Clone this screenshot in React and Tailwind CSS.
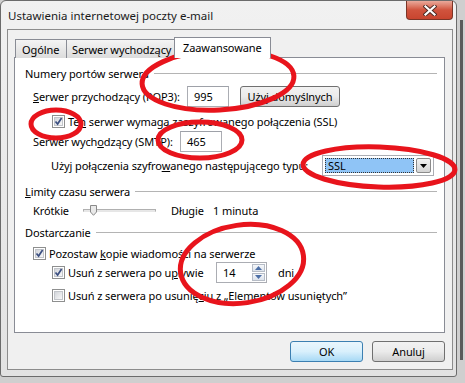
import React from 'react';

const Check = ({ checked }) => (
  <span className="w-[13px] h-[13px] shrink-0 border border-[#8e8f8f] bg-white p-[1px] flex">
    <span className="relative flex-1 border border-[#c2c5ca] bg-linear-to-br from-[#d2d5da] to-[#f8f8f9]">
      {checked && (
        <svg className="absolute -left-[1px] -top-[1px]" width="9" height="9" viewBox="0 0 9 9">
          <path d="M1.5 4.5 L3.6 7 L7.6 1" fill="none" stroke="#3b4f81" strokeWidth="1.7" />
        </svg>
      )}
    </span>
  </span>
);

const Button = ({ children, primary, className = '' }) => (
  <div
    className={`h-[21px] flex items-center justify-center rounded-[3px] border ${
      primary
        ? 'border-[#3c7fb1] bg-linear-to-b from-[#eaf6fd] via-[#d9f0fc] to-[#a7d9f5]'
        : 'border-[#707070] bg-linear-to-b from-[#f2f2f2] via-[#ebebeb] to-[#cfcfcf]'
    } ${className}`}
  >
    {children}
  </div>
);

const Group = ({ children, top }) => (
  <div className={`flex items-center h-[16px] pl-[10px] pr-[7px] ${top}`}>
    <span>{children}</span>
    <span className="flex-1 ml-[5px] h-px bg-[#b4b4b4]" />
  </div>
);

const Input = ({ value, className = '' }) => (
  <div className={`h-[21px] border border-[#abadb3] border-t-[#9ea1a8] bg-white flex items-center pl-[6px] ${className}`}>
    {value}
  </div>
);

export default function App() {
  return (
    <div className="relative w-[465px] h-[383px] overflow-hidden whitespace-nowrap bg-[#cfcfcf] font-['Noto_Sans',sans-serif] text-[11px] tracking-[-0.1px] leading-none text-black">
      <div className="absolute right-[2px] top-[20px] w-[3px] h-[340px] bg-[#5a5a5a]" />
      {/* window */}
      <div className="relative w-[457px] h-[377px] rounded-t-[6px] rounded-b-[3px] border border-[#6b6b6b] bg-linear-to-b from-[#f1f1f1] to-[#e2e2e2] flex flex-col pl-[6px] pr-[3px] pb-[6px]">
        <div className="h-[28px] flex items-start justify-between">
          <span className="mt-[9px] ml-[1px] text-[11.5px] tracking-normal text-[#1a1a1a]">Ustawienia internetowej poczty e-mail</span>
          <div className="w-[47px] h-[19px] rounded-b-[4px] border border-t-0 border-[#7a3527] bg-linear-to-b from-[#e9a99b] via-[#d0533d] to-[#c8452f] flex items-center justify-center">
            <svg width="14" height="11" viewBox="0 0 14 11">
              <path d="M2.5 1.5 L11.5 9.5 M11.5 1.5 L2.5 9.5" stroke="#4a2a24" strokeWidth="4" strokeLinecap="square" />
              <path d="M2.5 1.5 L11.5 9.5 M11.5 1.5 L2.5 9.5" stroke="#ffffff" strokeWidth="2.2" strokeLinecap="square" />
            </svg>
          </div>
        </div>
        {/* client */}
        <div className="flex-1 border border-[#8c8c8c] bg-[#f0f0f0] flex flex-col pl-[6px] pr-[7px]">
          {/* tabs */}
          <div className="flex items-end h-[27px] pl-[1px]">
            <div className="relative top-px h-[19px] w-[52px] border border-b-0 border-[#898c95] bg-linear-to-b from-[#f4f4f4] to-[#dcdcdc] pl-[6px] flex items-center">Ogólne</div>
            <div className="relative top-px h-[19px] w-[110px] -ml-px border border-b-0 border-[#898c95] bg-linear-to-b from-[#f4f4f4] to-[#dcdcdc] pl-[5px] flex items-center">Serwer wychodzący</div>
            <div className="relative z-10 top-px h-[21px] w-[97px] -ml-[2px] border border-b-0 border-[#898c95] bg-white pl-[8px] pb-[2px] flex items-center">Zaawansowane</div>
          </div>
          {/* panel */}
          <div className="h-[276px] border border-[#898c95] bg-white flex flex-col">
            <Group top="mt-[7px]">Numery portów serwera</Group>
            <div className="flex items-center mt-[5px] pl-[18px] h-[21px]">
              <span className="w-[154px]"><u>S</u>erwer przychodzący (POP3):</span>
              <Input value="995" className="w-[42px]" />
              <Button className="ml-[11px] w-[100px]">Użyj domyślnych</Button>
            </div>
            <div className="flex items-center mt-[6px] pl-[37px] h-[16px] gap-[3px]">
              <Check checked />
              <span>Te<u>n</u> serwer wymaga zaszyfrowanego połączenia (SSL)</span>
            </div>
            <div className="flex items-center mt-[2px] pl-[18px] h-[21px]">
              <span className="w-[147px]">Serwer wych<u>o</u>dzący (SMTP):</span>
              <Input value="465" className="w-[42px]" />
            </div>
            <div className="flex items-center mt-[3px] pl-[36px] h-[21px]">
              <span className="w-[271px]">Użyj połączenia szyfro<u>w</u>anego następującego typu:</span>
              <div className="w-[112px] h-[21px] border border-[#abadb3] bg-white flex items-stretch p-[2px]">
                <div className="flex-1 bg-[#8fc4f6] border border-dotted border-[#333] flex items-center pl-[2px]">SSL</div>
                <div className="w-[15px] ml-[2px] border border-[#8b8b8b] rounded-[2px] bg-linear-to-b from-[#f2f2f2] to-[#d4d4d4] flex items-center justify-center">
                  <svg width="7" height="4" viewBox="0 0 7 4"><path d="M0 0 H7 L3.5 4 Z" fill="#000" /></svg>
                </div>
              </div>
            </div>
            <Group top="mt-[7px]"><u>L</u>imity czasu serwera</Group>
            <div className="flex items-center mt-[3px] pl-[18px] h-[16px]">
              <span className="w-[50px]">Krótkie</span>
              <div className="relative w-[73px] h-[16px] flex items-center">
                <div className="w-full h-[3px] border border-[#b0b0b0] border-b-[#e6e6e6] bg-[#e7e7e7]" />
                <svg className="absolute left-[7px] top-[3px]" width="7" height="11" viewBox="0 0 7 11">
                  <path d="M0.5 0.5 H6.5 V7 L3.5 10.3 L0.5 7 Z" fill="#e9e9e9" stroke="#8a8a8a" />
                </svg>
              </div>
              <span className="ml-[15px] w-[42px]">Długie</span>
              <span>1 minuta</span>
            </div>
            <Group top="mt-[6px]">Dostarczanie</Group>
            <div className="flex items-center mt-[5px] pl-[18px] h-[16px] gap-[3px]">
              <Check checked />
              <span>Pozostaw <u>k</u>opie wiadomości na serwerze</span>
            </div>
            <div className="flex items-center mt-[1px] pl-[37px] h-[21px]">
              <Check checked />
              <span className="ml-[3px] w-[148px]">Usuń z serwera po u<u>p</u>ływie</span>
              <div className="w-[51px] h-[21px] border border-[#abadb3] bg-white flex items-center">
                <span className="flex-1 pl-[6px]">14</span>
                <div className="w-[15px] h-full flex flex-col p-px gap-px">
                  <div className="flex-1 border border-[#b6bcc6] bg-linear-to-b from-[#f5f7fa] to-[#dde3ec] flex items-center justify-center">
                    <svg width="7" height="4" viewBox="0 0 7 4"><path d="M0 4 H7 L3.5 0 Z" fill="#4d6fa6" /></svg>
                  </div>
                  <div className="flex-1 border border-[#b6bcc6] bg-linear-to-b from-[#f5f7fa] to-[#dde3ec] flex items-center justify-center">
                    <svg width="7" height="4" viewBox="0 0 7 4"><path d="M0 0 H7 L3.5 4 Z" fill="#4d6fa6" /></svg>
                  </div>
                </div>
              </div>
              <span className="ml-[11px]">dni</span>
            </div>
            <div className="flex items-center mt-[4px] pl-[37px] h-[16px] gap-[3px]">
              <Check />
              <span>Usuń z serwera po usunię<u>c</u>iu z „Elementów usuniętych”</span>
            </div>
          </div>
          {/* buttons */}
          <div className="flex justify-end gap-[9px] mt-[8px]">
            <Button primary className="w-[73px]">OK</Button>
            <Button className="w-[73px]">Anuluj</Button>
          </div>
        </div>
      </div>
      {/* red annotations */}
      <svg className="absolute inset-0 pointer-events-none" width="465" height="383" viewBox="0 0 465 383">
        <g fill="none" stroke="#e8141c" strokeWidth="5">
          <ellipse cx="218" cy="80" rx="76" ry="30" transform="rotate(-3 218 80)" />
          <ellipse cx="56" cy="124" rx="25" ry="14" />
          <ellipse cx="200" cy="140" rx="42" ry="18" />
          <ellipse cx="379" cy="167" rx="76" ry="20" transform="rotate(2 379 167)" />
          <ellipse cx="242" cy="264" rx="62" ry="39" transform="rotate(-8 242 264)" />
        </g>
      </svg>
    </div>
  );
}
